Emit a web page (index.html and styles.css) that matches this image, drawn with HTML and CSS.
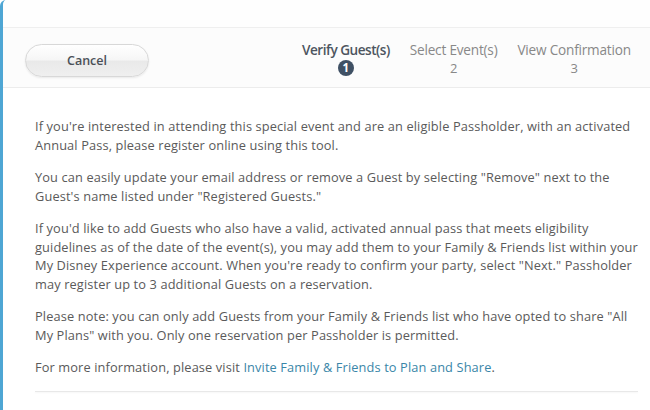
FILE: index.html
```html
<!DOCTYPE html>
<html>
<head>
<meta charset="utf-8">
<link rel="stylesheet" href="styles.css">
</head>
<body>
<div class="panel">
  <div class="topbar"></div>
  <div class="header">
    <button class="cancel">Cancel</button>
    <ol class="steps">
      <li class="step active"><span class="label">Verify Guest(s)</span><span class="num">1</span></li>
      <li class="step"><span class="label">Select Event(s)</span><span class="num">2</span></li>
      <li class="step"><span class="label">View Confirmation</span><span class="num">3</span></li>
    </ol>
  </div>
  <div class="content">
    <p>If you're interested in attending this special event and are an eligible Passholder, with an activated<br>Annual Pass, please register online using this tool.</p>
    <p>You can easily update your email address or remove a Guest by selecting "Remove" next to the<br>Guest's name listed under "Registered Guests."</p>
    <p>If you'd like to add Guests who also have a valid, activated annual pass that meets eligibility<br>guidelines as of the date of the event(s), you may add them to your Family &amp; Friends list within your<br>My Disney Experience account. When you're ready to confirm your party, select "Next." Passholder<br>may register up to 3 additional Guests on a reservation.</p>
    <p>Please note: you can only add Guests from your Family &amp; Friends list who have opted to share "All<br>My Plans" with you. Only one reservation per Passholder is permitted.</p>
    <p>For more information, please visit <a href="#">Invite Family &amp; Friends to Plan and Share</a>.</p>
  </div>
  <div class="footer-line"></div>
</div>
</body>
</html>
```
FILE: styles.css
```css
html, body {
  margin: 0;
  padding: 0;
  background: #ffffff;
}
body {
  width: 650px;
  height: 410px;
  overflow: hidden;
  font-family: "Open Sans", "DejaVu Sans", sans-serif;
  color: #555;
}
.panel {
  height: 410px;
  border-left: 3px solid #4ea6d4;
  border-top-left-radius: 6px;
  box-sizing: border-box;
  background: #fff;
  overflow: hidden;
}
.topbar {
  height: 27px;
  border-bottom: 1px solid #efefef;
  background: #fefefe;
}
.header {
  height: 59px;
  display: flex;
  align-items: center;
  padding-left: 22px;
  background: #fcfcfc;
  border-bottom: 1px solid #ececec;
}
.cancel {
  width: 124px;
  height: 33px;
  border-radius: 17px;
  border: 1px solid #d8d8d8;
  background: linear-gradient(#ffffff 0%, #f6f6f6 48%, #e9e9e9 52%, #efefef 100%);
  box-shadow: 0 1px 2px rgba(0,0,0,0.08);
  font-family: "Open Sans", sans-serif;
  font-size: 12.5px;
  font-weight: 600;
  color: #4a4f57;
  margin-top: 5px;
}
.steps {
  list-style: none;
  display: flex;
  gap: 20px;
  margin: 3px 0 0 153px;
  padding: 0;
}
.step {
  display: flex;
  flex-direction: column;
  align-items: center;
  font-size: 13.6px;
  color: #888;
  line-height: 17px;
}
.step .label {
  letter-spacing: -0.2px;
}
.step .num {
  margin-top: 2px;
  font-size: 13px;
}
.step.active .label {
  color: #4d5560;
  font-weight: 600;
  letter-spacing: -0.5px;
}
.step.active .num {
  width: 16px;
  height: 16px;
  border-radius: 50%;
  background: #3f5064;
  color: #fff;
  font-weight: 700;
  font-size: 11.5px;
  line-height: 16px;
  text-align: center;
}
.content {
  padding: 29px 0 0 32px;
  font-size: 12.8px;
  letter-spacing: 0.12px;
  line-height: 18.5px;
  color: #5a5a5a;
  white-space: nowrap;
}
.content p {
  margin: 0 0 14px 0;
}
.content a {
  color: #3a86a8;
  text-decoration: none;
}
.footer-line {
  margin: 0 12px 0 32px;
  border-top: 1px solid #e8e8e8;
  box-shadow: 0 1px 2px rgba(0,0,0,0.05);
}
```
